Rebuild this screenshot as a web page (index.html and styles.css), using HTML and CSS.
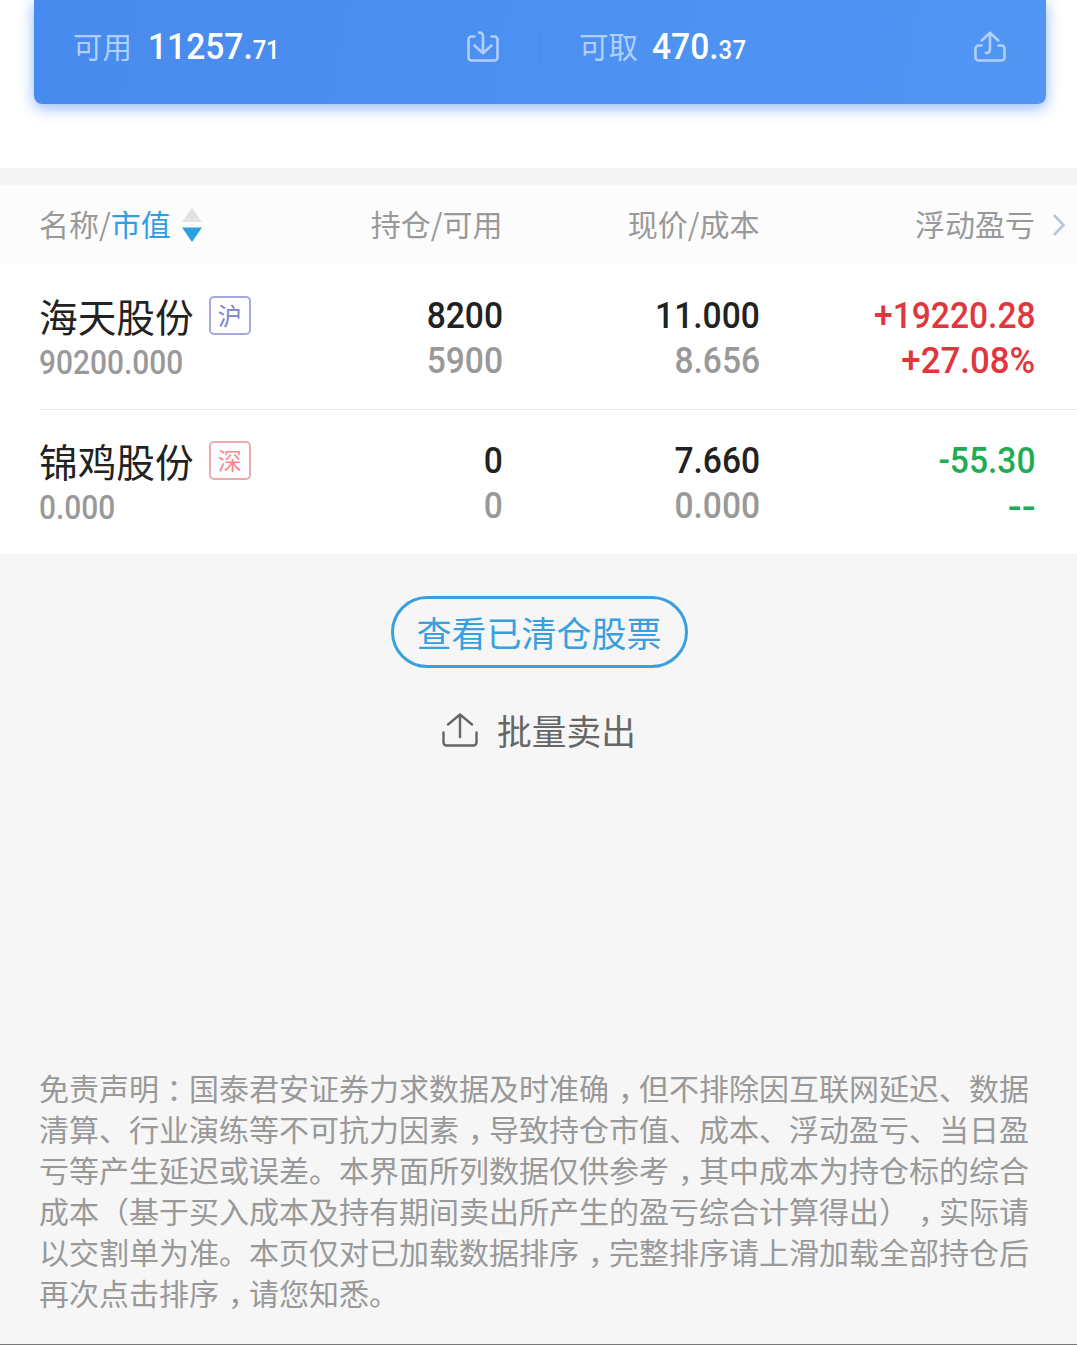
FILE: index.html
```html
<!DOCTYPE html>
<html lang="zh-CN">
<head>
<meta charset="utf-8">
<title>持仓</title>
<link rel="stylesheet" href="styles.css">
</head>
<body>
<section class="summary">
  <div class="card">
    <div class="balance">
      <span class="balance-label">可用</span>
      <span class="num balance-value">11257.<small>71</small></span>
      <svg class="balance-icon" width="34" height="34" viewBox="0 0 34 34"><path d="M8.5 6.500H5.500a3 3 0 0 0-3 3V27.500a3 3 0 0 0 3 3H28.500a3 3 0 0 0 3-3V9.500a3 3 0 0 0-3-3H25.500M13 2.500c2.800 0 4 1.500 4 4V22.500M8.500 15.500L17 23.200l8.500-7.700"/></svg>
    </div>
    <div class="balance">
      <span class="balance-label">可取</span>
      <span class="num balance-value">470.<small>37</small></span>
      <svg class="balance-icon" width="34" height="34" viewBox="0 0 34 34"><path d="M8.500 15.500H5.500a3 3 0 0 0-3 3V27.500a3 3 0 0 0 3 3H28.500a3 3 0 0 0 3-3V18.500a3 3 0 0 0-3-3H25.500M8.700 10.500L17 2.800l8.300 7.700M17 3.500V18.500c0 3-1.300 4.600-4 4.600"/></svg>
    </div>
  </div>
</section>

<section class="holdings">
  <div class="grid head">
    <div class="head-name"><span>名称/<span class="active">市值</span></span>
      <svg class="sort" width="20" height="34" viewBox="0 0 20 34"><path class="sort-up" d="M10 0L20 14H0z"/><path class="sort-down" d="M0 19.500H20L10 34z"/></svg>
    </div>
    <div class="right">持仓/可用</div>
    <div class="right">现价/成本</div>
    <div class="right">浮动盈亏</div>
    <svg class="chevron" width="14" height="24" viewBox="0 0 14 24"><path d="M2 2L11.500 12L2 22"/></svg>
  </div>

  <div class="grid row">
    <div class="stock">
      <div class="stock-title">海天股份<span class="tag tag-sh">沪</span></div>
      <div class="num value">90200.000</div>
    </div>
    <div class="pair"><span class="num">8200</span><span class="num sub">5900</span></div>
    <div class="pair"><span class="num">11.000</span><span class="num sub">8.656</span></div>
    <div class="pair up"><span class="num">+19220.28</span><span class="num percent">+27.08%</span></div>
  </div>

  <div class="grid row">
    <div class="stock">
      <div class="stock-title">锦鸡股份<span class="tag tag-sz">深</span></div>
      <div class="num value">0.000</div>
    </div>
    <div class="pair"><span class="num">0</span><span class="num sub">0</span></div>
    <div class="pair"><span class="num">7.660</span><span class="num sub">0.000</span></div>
    <div class="pair down"><span class="num">-55.30</span><span class="num dashes">--</span></div>
  </div>
</section>

<section class="actions">
  <button class="cleared">查看已清仓股票</button>
  <div class="batch">
    <svg class="batch-icon" width="36" height="36" viewBox="0 0 36 36"><path d="M1.500 20.500V30.500a3 3 0 0 0 3 3H31.500a3 3 0 0 0 3-3V20.500M18 25V2.500M6 12.500L18 2.500l12 10"/></svg>
    <span>批量卖出</span>
  </div>
</section>

<p class="disclaimer">免责声明<span class="colon">：</span>国泰君安证券力求数据及时准确<span class="comma">，</span>但不排除因互联网延迟、数据<br>清算、行业演练等不可抗力因素<span class="comma">，</span>导致持仓市值、成本、浮动盈亏、当日盈<br>亏等产生延迟或误差。本界面所列数据仅供参考<span class="comma">，</span>其中成本为持仓标的综合<br>成本（基于买入成本及持有期间卖出所产生的盈亏综合计算得出）<span class="comma">，</span>实际请<br>以交割单为准。本页仅对已加载数据排序<span class="comma">，</span>完整排序请上滑加载全部持仓后<br>再次点击排序<span class="comma">，</span>请您知悉。</p>
</body>
</html>
```

FILE: styles.css
```css
* { box-sizing: border-box; }

body {
  margin: 0;
  height: 1345px;
  overflow: hidden;
  display: flex;
  flex-direction: column;
  background: #f6f6f6;
  border-bottom: 1px solid #777;
  font-family: "Noto Sans CJK SC", sans-serif;
  color: #222;
}

svg { display: block; fill: none; flex: none; }

.num {
  font-family: Roboto, sans-serif;
  font-weight: 500;
  font-size: 36.5px;
  line-height: 45px;
  transform: scaleX(.92);
  transform-origin: right center;
  white-space: nowrap;
}

/* Balance card */
.summary {
  height: 168px;
  padding: 0 31px 0 34px;
  background: #fff;
  overflow: hidden;
}

.card {
  height: 103.5px;
  display: grid;
  grid-template-columns: 505px 507px;
  border-radius: 0 0 8px 8px;
  background: linear-gradient(100deg, #488aed, #4c90f1 50%, #5196f3);
  box-shadow: 0 4px 15px rgba(70, 135, 250, .6);
}

.balance {
  height: 36px;
  margin-top: 28px;
  padding: 0 39px 0 39px;
  display: flex;
  align-items: center;
}

.balance + .balance { border-left: 1px solid #478aeb; }

.balance-label {
  margin-top: -3px;
  font-size: 29.5px;
  line-height: 36px;
  color: #b0d0fb;
}

.balance-value {
  margin: 5px 0 0 16px;
  color: #fff;
  transform-origin: left center;
}

.balance + .balance .balance-value { margin-left: 14px; }

.balance-value small { font-size: 26px; letter-spacing: -.5px; }
.balance + .balance small { letter-spacing: .3px; }

.balance-icon { margin: 1px 0 0 auto; }
.balance-icon path {
  stroke: #b0d0fb;
  stroke-width: 2.6;
  stroke-linecap: round;
  stroke-linejoin: round;
}

/* Holdings table */
.holdings {
  border-top: 17px solid #f4f4f4;
  background: #fff;
}

.grid {
  display: grid;
  grid-template-columns: 250px 213.5px 257px 275.5px 1fr;
  padding-left: 39px;
}

.head {
  height: 79px;
  align-items: center;
  background: #fcfcfc;
  color: #999;
  font-size: 30px;
  line-height: 44px;
}

.head-name { display: flex; align-items: center; }
.head-name > span, .right { padding-bottom: 4px; }
.active { color: #2f9fe4; }
.sort { margin-left: 11px; }
.sort-up { fill: #dfe3e6; }
.sort-down { fill: #2f9fe4; }
.right { text-align: right; }
.chevron { margin-left: 17px; }
.chevron path { stroke: #b3c8dc; stroke-width: 2.6; }

.row { height: 145px; padding-top: 29px; }
.row + .row {
  background: linear-gradient(#ebebeb, #ebebeb) 39px 0 / 100% 1px no-repeat;
}

.stock-title {
  display: flex;
  align-items: center;
  height: 45px;
  font-size: 38.700px;
  line-height: 45px;
}

.tag {
  width: 42px;
  height: 39px;
  margin-left: 15px;
  border: 2px solid;
  border-radius: 5px;
  font-size: 24px;
  line-height: 34px;
  text-align: center;
}

.tag-sh { color: #7d82d8; border-color: #a5a8e2; }
.tag-sz { color: #f58a90; border-color: #f0a9ae; }

.value {
  margin-top: 3px;
  font-size: 32.500px;
  transform: scaleX(.92);
  transform-origin: left center;
  color: #999;
}

.pair { display: flex; flex-direction: column; align-items: flex-end; }
.pair .num { margin-right: -.5px; }
.sub { color: #999; }
.percent { transform: scaleX(.955); }
.dashes { transform: scaleX(1.13); padding-top: 2px; }
.up { color: #e0373e; }
.down { color: #21ac53; }

/* Actions */
.actions {
  display: flex;
  flex-direction: column;
  align-items: center;
  padding: 41.5px 0 0 1px;
}

.cleared {
  width: 297px;
  height: 72px;
  padding: 0;
  border: 3px solid #3a9fdf;
  border-radius: 37px;
  background: transparent;
  color: #3a9fdf;
  font: 35px/66px "Noto Sans CJK SC", sans-serif;
}

.batch {
  display: flex;
  align-items: center;
  gap: 19px;
  margin-top: 37px;
  font-size: 34.700px;
  line-height: 50px;
  color: #666;
}

.batch-icon path { stroke: #666; stroke-width: 2.4; stroke-linecap: round; stroke-linejoin: round; }

/* Disclaimer */
.disclaimer {
  margin: auto 0 31px;
  padding-left: 39px;
  font-size: 30px;
  line-height: 41px;
  color: #999;
  white-space: nowrap;
  text-spacing-trim: space-all;
}

/* Half-width forms padded back to a full cell, so the marks sit in its middle */
.colon, .comma { font-feature-settings: "halt"; }
.colon { padding: 0 7.5px; }
.comma { padding: 0 6px 0 9px; }
```
